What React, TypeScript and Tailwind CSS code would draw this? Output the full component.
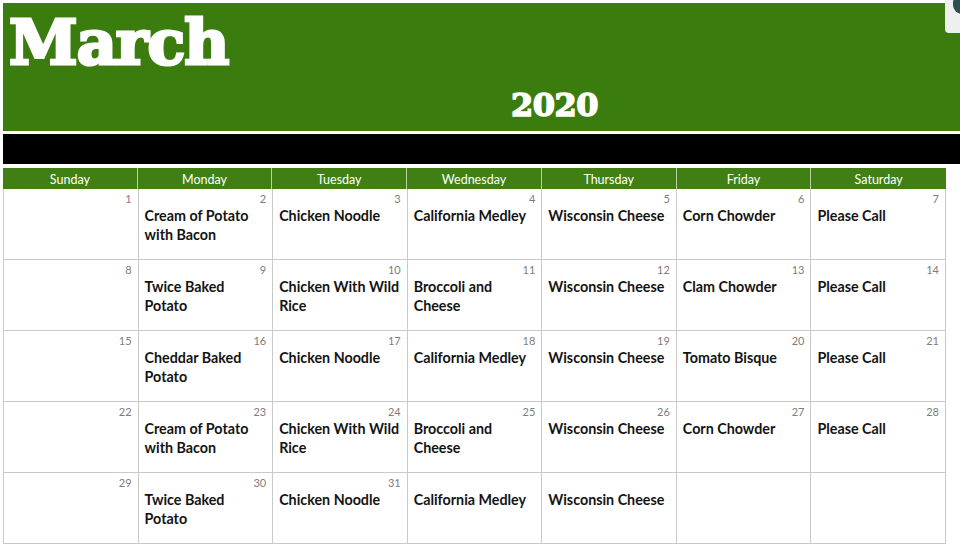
const days = ['Sunday', 'Monday', 'Tuesday', 'Wednesday', 'Thursday', 'Friday', 'Saturday'];

type Cell = { n?: number; text?: string };

const weeks: Cell[][] = [
  [
    { n: 1 },
    { n: 2, text: 'Cream of Potato with Bacon' },
    { n: 3, text: 'Chicken Noodle' },
    { n: 4, text: 'California Medley' },
    { n: 5, text: 'Wisconsin Cheese' },
    { n: 6, text: 'Corn Chowder' },
    { n: 7, text: 'Please Call' },
  ],
  [
    { n: 8 },
    { n: 9, text: 'Twice Baked Potato' },
    { n: 10, text: 'Chicken With Wild Rice' },
    { n: 11, text: 'Broccoli and Cheese' },
    { n: 12, text: 'Wisconsin Cheese' },
    { n: 13, text: 'Clam Chowder' },
    { n: 14, text: 'Please Call' },
  ],
  [
    { n: 15 },
    { n: 16, text: 'Cheddar Baked Potato' },
    { n: 17, text: 'Chicken Noodle' },
    { n: 18, text: 'California Medley' },
    { n: 19, text: 'Wisconsin Cheese' },
    { n: 20, text: 'Tomato Bisque' },
    { n: 21, text: 'Please Call' },
  ],
  [
    { n: 22 },
    { n: 23, text: 'Cream of Potato with Bacon' },
    { n: 24, text: 'Chicken With Wild Rice' },
    { n: 25, text: 'Broccoli and Cheese' },
    { n: 26, text: 'Wisconsin Cheese' },
    { n: 27, text: 'Corn Chowder' },
    { n: 28, text: 'Please Call' },
  ],
  [
    { n: 29 },
    { n: 30, text: 'Twice Baked Potato' },
    { n: 31, text: 'Chicken Noodle' },
    { text: 'California Medley' },
    { text: 'Wisconsin Cheese' },
    {},
    {},
  ],
];

export default function App() {
  return (
    <div className="relative w-[960px] h-[560px] bg-white overflow-hidden font-['Lato',sans-serif]">
      {/* corner widget */}
      <div className="absolute z-10 right-0 top-0 w-[15px] h-[33px] bg-[#eef0ef] rounded-bl-[4px] overflow-hidden">
        <div className="absolute left-[8px] top-[-6px] w-[18px] h-[20px] rounded-full bg-[#2d4f50]" />
      </div>

      <div className="pl-[3px] pt-[3px]">
        {/* banner */}
        <div className="h-[128px] bg-[#3b7c0f] relative">
          <div className="pl-[6px] pt-[4px] text-[62px] leading-[72px] font-black text-white font-['DejaVu_Serif',serif] tracking-[-1px] [-webkit-text-stroke:3px_white]">
            March
          </div>
          <div className="absolute left-[508px] top-[83px] text-[32px] leading-[38px] font-black text-white font-['DejaVu_Serif',serif] tracking-[-0.5px] [-webkit-text-stroke:1.5px_white]">
            2020
          </div>
        </div>
        <div className="h-[3px]" />
        <div className="h-[30px] bg-black" />
        <div className="h-[4px]" />

        {/* calendar */}
        <div className="w-[943px]">
          <div className="grid grid-cols-7 bg-[#3f7f13] h-[21px]">
            {days.map((d, i) => (
              <div
                key={d}
                className={`flex items-center justify-center pt-[3px] text-white text-[12.5px] leading-none ${i < 6 ? 'border-r border-[#b9d3a5]' : ''}`}
              >
                {d}
              </div>
            ))}
          </div>
          <div className="border-l border-[#c9c9c9]">
            {weeks.map((w, wi) => (
              <div key={wi} className="grid grid-cols-7 h-[71px]">
                {w.map((c, ci) => (
                  <div key={ci} className="border-r border-b border-[#c9c9c9] pl-[6px] pr-[6px] pt-[3px]">
                    <div className="text-right text-[11px] leading-[14px] text-[#7d7d7d] h-[14px]">{c.n ?? ''}</div>
                    {c.text && (
                      <div className="text-[14.3px] leading-[19px] font-bold text-[#141414]">{c.text}</div>
                    )}
                  </div>
                ))}
              </div>
            ))}
          </div>
        </div>
      </div>
    </div>
  );
}
